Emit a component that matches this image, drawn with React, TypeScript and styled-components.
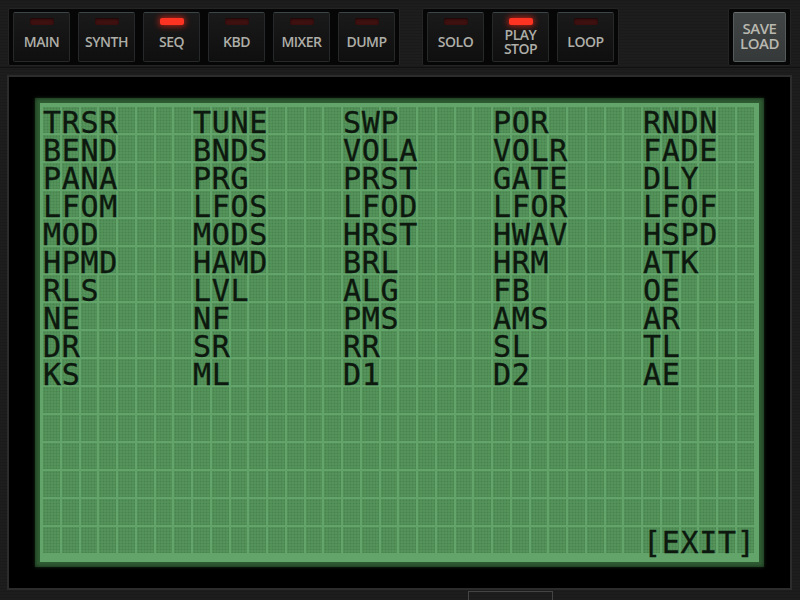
import React from 'react';
import styled, { createGlobalStyle } from 'styled-components';

const GlobalStyle = createGlobalStyle`
  html, body {
    margin: 0;
    padding: 0;
    background: #1c1c1c;
    width: 800px;
    height: 600px;
    overflow: hidden;
  }
  #root {
    width: 800px;
    height: 600px;
  }
`;

const Screen = styled.div`
  width: 800px;
  height: 600px;
  display: flex;
  flex-direction: column;
  background: repeating-linear-gradient(0deg, #1d1d1d 0px, #1d1d1d 2px, #1a1a1a 2px, #1a1a1a 3px);
  font-family: 'Open Sans', 'DejaVu Sans', sans-serif;
`;

const TopBar = styled.div`
  height: 68px;
  box-sizing: border-box;
  padding: 8px 9px 0 8px;
  display: flex;
  align-items: flex-start;
  gap: 22px;
  border-bottom: 1px solid #111;
`;

const ButtonGroup = styled.div`
  display: flex;
  gap: 8px;
  padding: 3px 4px;
  background: #060606;
  border: 1px solid #242424;
  border-radius: 2px;
`;

const Spacer = styled.div`
  flex: 1;
`;

const PadButton = styled.div<{ $light?: boolean; $w?: number }>`
  width: ${p => p.$w ?? 57}px;
  height: 50px;
  box-sizing: border-box;
  display: flex;
  flex-direction: column;
  align-items: center;
  border: 1px solid ${p => (p.$light ? '#555a5a' : '#25292a')};
  border-top-color: ${p => (p.$light ? '#6a7070' : '#3b4548')};
  border-radius: 2px;
  background: ${p =>
    p.$light
      ? 'linear-gradient(180deg, #424545 0%, #36393a 100%)'
      : 'linear-gradient(180deg, #1a1a1a 0%, #0f0f0f 100%)'};
  color: ${p => (p.$light ? '#b8b8b0' : '#aeaea8')};
`;

const Led = styled.div<{ $on?: boolean }>`
  margin-top: 5px;
  width: 24px;
  height: 7px;
  border-radius: 2px;
  background: ${p => (p.$on ? '#ff3322' : '#3e1010')};
  box-shadow: ${p => (p.$on ? '0 0 6px 1px rgba(255, 40, 20, 0.7)' : 'inset 0 1px 2px rgba(0,0,0,0.6)')};
`;

const Label = styled.div<{ $size?: number }>`
  flex: 1;
  display: flex;
  justify-content: center;
  align-items: center;
  padding-bottom: 3px;
  font-size: ${p => p.$size ?? 14}px;
  line-height: ${p => (p.$size ?? 14)}px;
  font-weight: 600;
  letter-spacing: -0.5px;
  text-align: center;
`;

const Body = styled.div`
  flex: 1;
  padding: 7px 8px 10px 7px;
  display: flex;
  flex-direction: column;
  position: relative;
`;

const Frame = styled.div`
  flex: 1;
  background: #000;
  border: 2px solid #2c2c2c;
  padding: 21px 28px 21px 26px;
  display: flex;
`;

const Lcd = styled.div`
  flex: 1;
  padding: 5px;
  background: #2f5c33;
  box-shadow: inset 0 0 4px rgba(0, 0, 0, 0.6), 0 0 3px rgba(60, 120, 64, 0.4);
  display: flex;
`;

const LcdInner = styled.div`
  flex: 1;
  background: #62a46a;
  padding: 4px 3px;
  display: flex;
`;

// cell grid and text layer share one grid area
const Display = styled.div`
  display: grid;
  grid-template-areas: 'lcd';
`;

const CharGrid = styled.div`
  grid-area: lcd;
  display: grid;
  grid-template-columns: repeat(38, 16.75px);
  grid-template-rows: repeat(16, 26px);
  gap: 2px;
`;

const Cell = styled.div`
  background-color: #54945b;
  background-image: radial-gradient(circle, rgba(20, 50, 20, 0.16) 0.8px, transparent 1.2px);
  background-size: 3px 3px;
`;

const TextLayer = styled.div`
  grid-area: lcd;
  display: flex;
  flex-direction: column;
  padding-top: 2px;
`;

const TextLine = styled.div`
  height: 28px;
  line-height: 28px;
  white-space: pre;
  font-family: 'DejaVu Sans Mono', 'Liberation Mono', monospace;
  font-size: 30px;
  letter-spacing: 0.69px;
  color: #0d180e;
  -webkit-text-stroke: 0.3px #0d180e;
`;

const BottomTab = styled.div`
  position: absolute;
  left: 468px;
  bottom: 0;
  width: 85px;
  height: 9px;
  border: 1px solid #444;
  border-bottom: none;
  box-sizing: border-box;
`;

const modeButtons = [
  { label: 'MAIN' },
  { label: 'SYNTH' },
  { label: 'SEQ', on: true },
  { label: 'KBD' },
  { label: 'MIXER' },
  { label: 'DUMP' },
];

const transportButtons = [
  { label: 'SOLO' },
  { label: 'PLAY\nSTOP', on: true },
  { label: 'LOOP' },
];

const words = [
  ['TRSR', 'TUNE', 'SWP', 'POR', 'RNDN'],
  ['BEND', 'BNDS', 'VOLA', 'VOLR', 'FADE'],
  ['PANA', 'PRG', 'PRST', 'GATE', 'DLY'],
  ['LFOM', 'LFOS', 'LFOD', 'LFOR', 'LFOF'],
  ['MOD', 'MODS', 'HRST', 'HWAV', 'HSPD'],
  ['HPMD', 'HAMD', 'BRL', 'HRM', 'ATK'],
  ['RLS', 'LVL', 'ALG', 'FB', 'OE'],
  ['NE', 'NF', 'PMS', 'AMS', 'AR'],
  ['DR', 'SR', 'RR', 'SL', 'TL'],
  ['KS', 'ML', 'D1', 'D2', 'AE'],
];

const COLS = 38;
const ROWS = 16;

const buildLines = () => {
  const lines: string[] = [];
  for (let r = 0; r < ROWS; r++) {
    const w = words[r];
    lines.push(w ? w.map(s => s.padEnd(8, ' ')).join('').trimEnd() : '');
  }
  lines[15] = ' '.repeat(32) + '[EXIT]';
  return lines;
};

const lines = buildLines();

const ButtonLabel = ({ text, size }: { text: string; size?: number }) => {
  const parts = text.split('\n');
  return (
    <Label $size={size}>
      <span>
        {parts.map((p, i) => (
          <React.Fragment key={p}>
            {i > 0 && <br />}
            {p}
          </React.Fragment>
        ))}
      </span>
    </Label>
  );
};

const App: React.FC = () => {
  return (
    <>
      <GlobalStyle />
      <Screen>
        <TopBar>
          <ButtonGroup>
            {modeButtons.map(b => (
              <PadButton key={b.label}>
                <Led $on={b.on} />
                <ButtonLabel text={b.label} />
              </PadButton>
            ))}
          </ButtonGroup>
          <ButtonGroup>
            {transportButtons.map(b => (
              <PadButton key={b.label}>
                <Led $on={b.on} />
                <ButtonLabel text={b.label} />
              </PadButton>
            ))}
          </ButtonGroup>
          <Spacer />
          <ButtonGroup>
            <PadButton $light $w={53}>
              <ButtonLabel text={'SAVE\nLOAD'} size={15} />
            </PadButton>
          </ButtonGroup>
        </TopBar>
        <Body>
          <Frame>
            <Lcd>
              <LcdInner>
                <Display>
                  <CharGrid>
                    {Array.from({ length: COLS * ROWS }, (_, i) => (
                      <Cell key={i} />
                    ))}
                  </CharGrid>
                  <TextLayer>
                    {lines.map((l, i) => (
                      <TextLine key={i}>{l}</TextLine>
                    ))}
                  </TextLayer>
                </Display>
              </LcdInner>
            </Lcd>
          </Frame>
          <BottomTab />
        </Body>
      </Screen>
    </>
  );
};

export default App;
